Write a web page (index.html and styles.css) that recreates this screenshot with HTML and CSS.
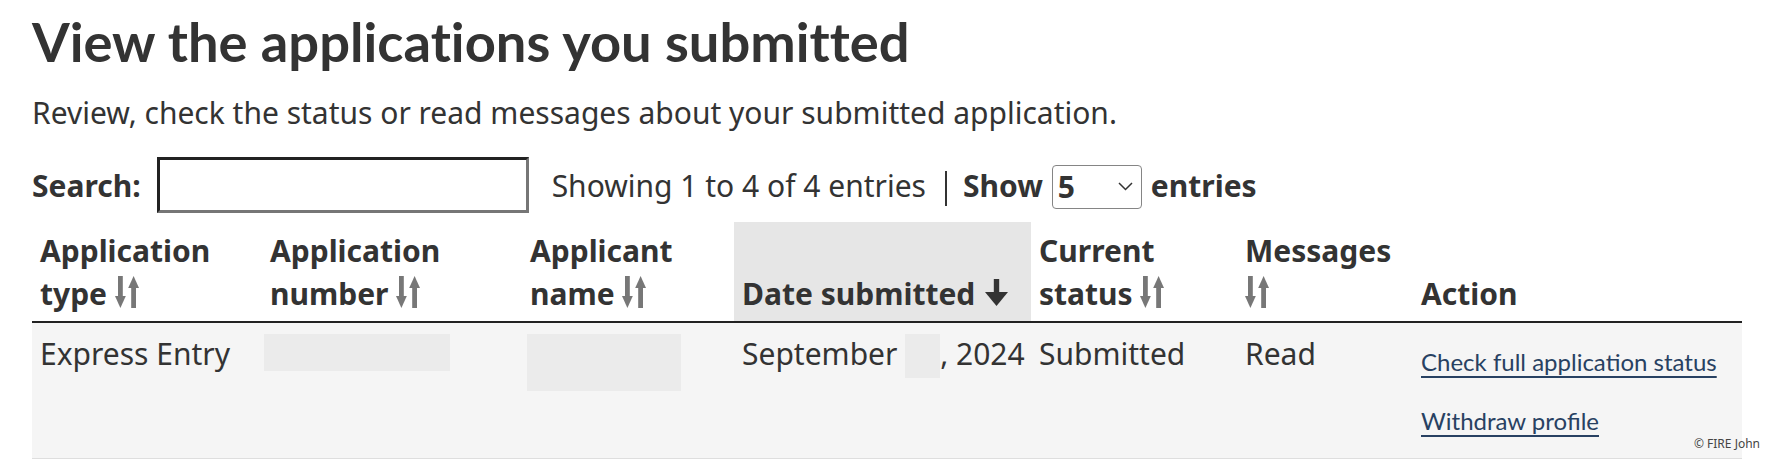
FILE: index.html
```html
<!DOCTYPE html>
<html lang="en">
<head>
<meta charset="utf-8">
<title>View the applications you submitted</title>
<link rel="stylesheet" href="styles.css">
</head>
<body>
<main class="page">
  <h1 class="title">View the applications you submitted</h1>
  <p class="lead">Review, check the status or read messages about your submitted application.</p>

  <div class="controls">
    <label class="search-label" for="search">Search:</label>
    <input class="search-input" id="search" type="search">
    <span class="info">Showing 1 to 4 of 4 entries</span>
    <span class="sep"></span>
    <span class="show-label">Show</span>
    <span class="select-wrap">
      <select class="length-select" aria-label="entries">
        <option>5</option>
      </select>
      <svg class="chevron" width="15" height="9" viewBox="0 0 15 9"><polyline points="1,1 7.5,7.5 14,1" fill="none" stroke="#333" stroke-width="1.5"/></svg>
    </span>
    <span class="show-label entries">entries</span>
  </div>

  <table class="apps">
    <colgroup>
      <col class="c1"><col class="c2"><col class="c3"><col class="c4"><col class="c5"><col class="c6"><col class="c7">
    </colgroup>
    <thead>
      <tr>
        <th>Application<br>type <svg class="sort" width="24" height="34" viewBox="0 0 24 34"><rect x="3" y="1" width="4.8" height="22" fill="#777"/><polygon points="0,21 10.8,21 5.4,33" fill="#777"/><polygon points="13.2,13 24,13 18.6,1" fill="#777"/><rect x="16.2" y="11" width="4.8" height="22" fill="#777"/></svg></th>
        <th>Application<br>number <svg class="sort" width="24" height="34" viewBox="0 0 24 34"><rect x="3" y="1" width="4.8" height="22" fill="#777"/><polygon points="0,21 10.8,21 5.4,33" fill="#777"/><polygon points="13.2,13 24,13 18.6,1" fill="#777"/><rect x="16.2" y="11" width="4.8" height="22" fill="#777"/></svg></th>
        <th>Applicant<br>name <svg class="sort" width="24" height="34" viewBox="0 0 24 34"><rect x="3" y="1" width="4.8" height="22" fill="#777"/><polygon points="0,21 10.8,21 5.4,33" fill="#777"/><polygon points="13.2,13 24,13 18.6,1" fill="#777"/><rect x="16.2" y="11" width="4.8" height="22" fill="#777"/></svg></th>
        <th class="sorted">Date submitted <svg class="sort-active" width="23" height="29" viewBox="0 0 23 29"><rect x="8.8" y="1" width="5.4" height="15" fill="#333"/><polygon points="0,14 23,14 11.5,28" fill="#333"/></svg></th>
        <th>Current<br>status <svg class="sort" width="24" height="34" viewBox="0 0 24 34"><rect x="3" y="1" width="4.8" height="22" fill="#777"/><polygon points="0,21 10.8,21 5.4,33" fill="#777"/><polygon points="13.2,13 24,13 18.6,1" fill="#777"/><rect x="16.2" y="11" width="4.8" height="22" fill="#777"/></svg></th>
        <th>Messages<br><svg class="sort" width="24" height="34" viewBox="0 0 24 34"><rect x="3" y="1" width="4.8" height="22" fill="#777"/><polygon points="0,21 10.8,21 5.4,33" fill="#777"/><polygon points="13.2,13 24,13 18.6,1" fill="#777"/><rect x="16.2" y="11" width="4.8" height="22" fill="#777"/></svg></th>
        <th>Action</th>
      </tr>
    </thead>
    <tbody>
      <tr>
        <td>Express Entry</td>
        <td><div class="redact redact-num"></div></td>
        <td><div class="redact redact-name"></div></td>
        <td class="nowrap">September <span class="redact redact-day"></span>, 2024</td>
        <td>Submitted</td>
        <td>Read</td>
        <td>
          <a class="action-link" href="#">Check full application status</a>
          <a class="action-link last" href="#">Withdraw profile</a>
        </td>
      </tr>
    </tbody>
  </table>
</main>
<div class="watermark">© FIRE John</div>
</body>
</html>
```

FILE: styles.css
```css
html, body {
  margin: 0;
  padding: 0;
  background: #fff;
}

body {
  position: relative;
  height: 460px;
  overflow: hidden;
  font-family: "Noto Sans", "DejaVu Sans", sans-serif;
  color: #333;
}

.page {
  padding: 7px 32px 0 32px;
}

.title {
  margin: 0;
  font-family: Lato, "Noto Sans", sans-serif;
  font-weight: 700;
  font-size: 54.3px;
  line-height: 68px;
  font-variant-ligatures: none;
  color: #333;
}

.lead {
  margin: 16px 0 0 0;
  font-size: 30px;
  line-height: 43px;
}

.controls {
  margin-top: 23px;
  height: 56px;
  display: flex;
  align-items: center;
  font-size: 30px;
  line-height: 43px;
}

.search-label {
  font-weight: 700;
  margin-right: 16px;
}

.search-input {
  box-sizing: border-box;
  width: 372px;
  height: 56px;
  margin: 0;
  padding: 0 8px;
  border-style: solid;
  border-width: 3px;
  border-color: #222 #767676 #767676 #222;
  background: #fff;
  font: inherit;
}

.info {
  margin-left: 23px;
}

.sep {
  width: 2px;
  height: 35px;
  margin: 7px 16px 0 19px;
  background: #333;
}

.show-label {
  font-weight: 700;
}

.entries {
  margin-left: 9px;
}

.select-wrap {
  position: relative;
  margin-left: 9px;
  margin-top: 4px;
  display: inline-block;
  height: 44px;
}

.length-select {
  -webkit-appearance: none;
  appearance: none;
  box-sizing: border-box;
  width: 90px;
  height: 44px;
  margin: 0;
  padding: 0 0 0 5px;
  border: 1px solid #858585;
  border-radius: 4px;
  background: #fff;
  font-family: "Noto Sans", sans-serif;
  font-weight: 700;
  font-size: 30px;
  line-height: 40px;
  color: #333;
}

.chevron {
  position: absolute;
  left: 66px;
  top: 17px;
  pointer-events: none;
}

.apps {
  margin-top: 9px;
  width: 1710px;
  table-layout: fixed;
  border-collapse: collapse;
  font-size: 30px;
  line-height: 43px;
}

.c1 { width: 230px; }
.c2 { width: 260px; }
.c3 { width: 212px; }
.c4 { width: 297px; }
.c5 { width: 206px; }
.c6 { width: 176px; }
.c7 { width: 329px; }

.apps th {
  text-align: left;
  vertical-align: bottom;
  font-weight: 700;
  padding: 7px 8px 6px 8px;
  border-bottom: 2px solid #222;
}

.apps th.sorted {
  background: #e6e6e6;
}

.sort {
  vertical-align: -4px;
}

.sort-active {
  vertical-align: -2px;
  margin-left: 2px;
}

.apps tbody tr {
  background: #f5f5f5;
  border-bottom: 1px solid #dedede;
}

.apps td {
  vertical-align: top;
  padding: 9px 8px 16px 8px;
}

.nowrap {
  white-space: nowrap;
}

.redact {
  background: #ebebeb;
}

.redact-num {
  width: 186px;
  height: 37px;
  margin: 2px 0 0 -6px;
}

.redact-name {
  width: 154px;
  height: 57px;
  margin: 2px 0 0 -3px;
}

.redact-day {
  display: inline-block;
  width: 35px;
  height: 44px;
  vertical-align: top;
  margin-top: 2px;
}

.action-link {
  display: block;
  width: max-content;
  margin-top: 8px;
  margin-bottom: 16px;
  font-family: Lato, "Noto Sans", sans-serif;
  font-size: 24px;
  line-height: 43px;
  color: #284162;
  text-decoration: underline;
  text-decoration-thickness: 1.5px;
  text-underline-offset: 5px;
}

.action-link.last {
  margin-top: 0;
  margin-bottom: 0;
}

.watermark {
  position: absolute;
  right: 14px;
  top: 436px;
  font-family: "Noto Sans", sans-serif;
  font-size: 12px;
  line-height: 16px;
  color: #444;
}
```
